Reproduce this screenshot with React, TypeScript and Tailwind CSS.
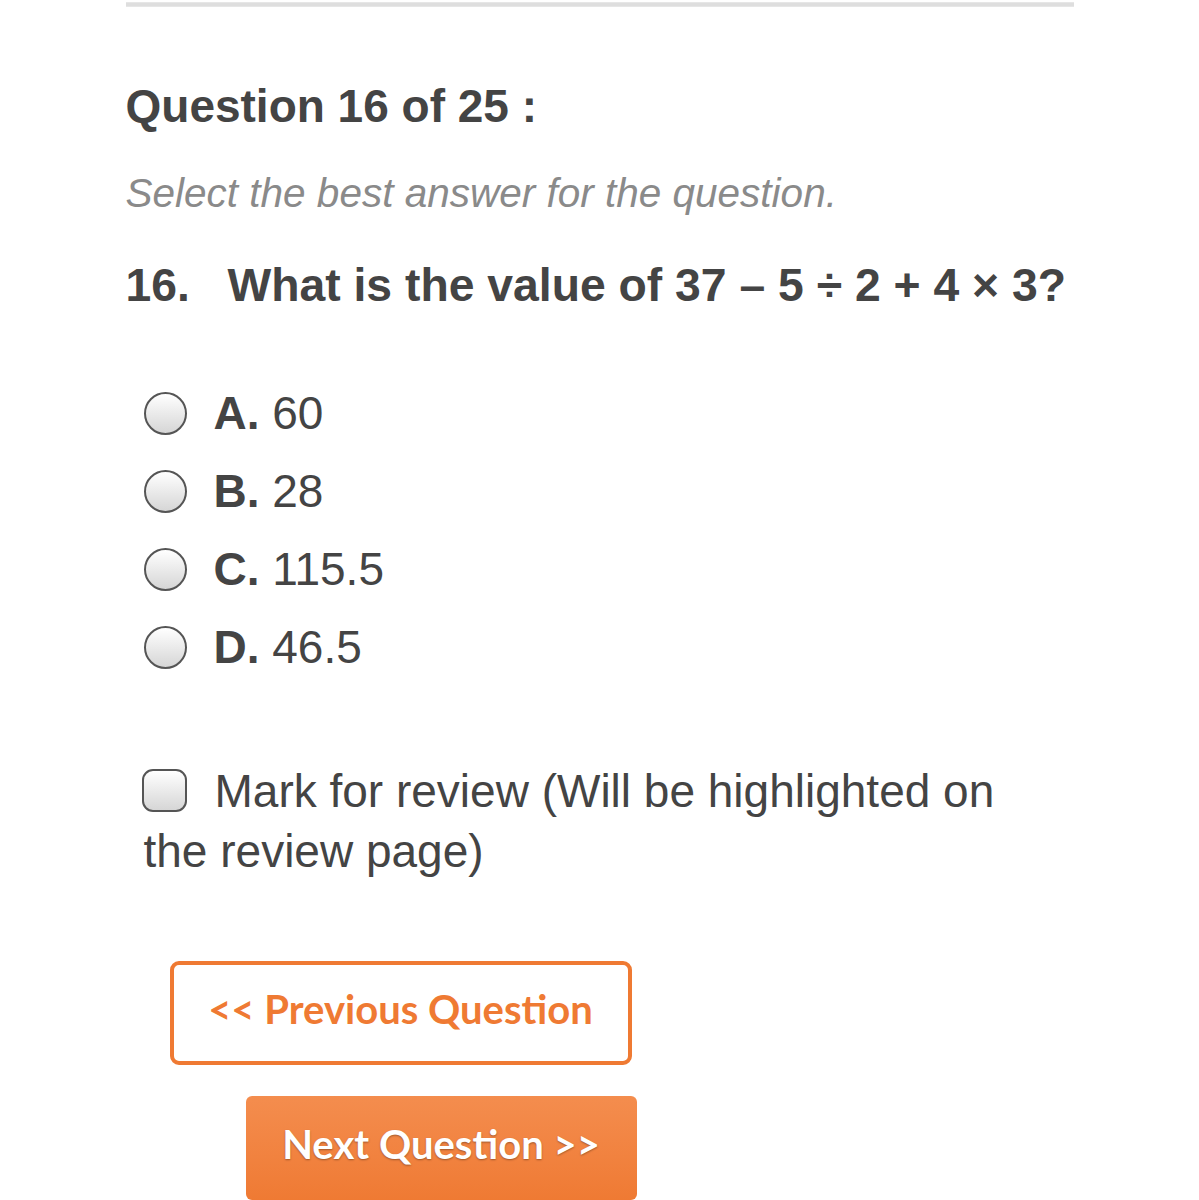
import React from 'react';

const options = [
    { letter: 'A.', value: '60' },
    { letter: 'B.', value: '28' },
    { letter: 'C.', value: '115.5' },
    { letter: 'D.', value: '46.5' },
];

function Radio() {
    return (
        <span className="inline-block w-[43px] h-[43px] shrink-0 rounded-full border-2 border-[#555] bg-linear-to-b from-white to-[#d6d6d6]" />
    );
}

export default function App() {
    return (
        <div className="min-h-screen bg-white text-[#444]" style={{ fontFamily: '"Liberation Sans", Arial, sans-serif' }}>
            <div className="mx-auto w-[948px] pt-[2px]">
                <div className="h-[5px] bg-[#dedede] border-y border-[#e6e6e6]" />

                <h1 className="mt-[76px] text-[46px] leading-[46px] font-bold">Question 16 of 25 :</h1>

                <p className="mt-[44px] text-[40.5px] leading-[40px] italic text-[#8a8a8a]">
                    Select the best answer for the question.
                </p>

                <h2 className="mt-[49px] text-[46.3px] leading-[46px] font-bold whitespace-nowrap">
                    <span className="inline-block w-[102px]">16.</span>
                    What is the value of 37 – 5 ÷ 2 + 4 × 3?
                </h2>

                <div className="mt-[66px] flex flex-col pl-[18px]">
                    {options.map((o) => (
                        <label key={o.letter} className="flex h-[78px] items-center gap-[27px] text-[46px] leading-none">
                            <Radio />
                            <span>
                                <span className="font-bold">{o.letter}</span> {o.value}
                            </span>
                        </label>
                    ))}
                </div>

                <p className="mt-[75px] ml-[18px] w-[900px] text-[46px] leading-[60px]">
                    <span className="inline-block w-[45px] h-[43px] mr-[28px] ml-[-2px] align-[-5px] rounded-[11px] border-2 border-[#555] bg-linear-to-b from-white to-[#d6d6d6]" />
                    Mark for review (Will be highlighted on the review page)
                </p>

                <div className="mt-[80px] flex flex-col" style={{ fontFamily: 'Lato, "Open Sans", sans-serif' }}>
                    <button className="ml-[44px] w-[462px] h-[104px] pb-[8px] rounded-[9px] border-4 border-[#ef7a33] bg-white text-[#ef7a33] text-[40px] font-bold">
                        &lt;&lt; Previous Question
                    </button>
                    <button className="mt-[31px] ml-[120px] w-[391px] h-[104px] pb-[8px] rounded-[6px] bg-linear-to-b from-[#f48d4e] to-[#ef7a33] text-white text-[40px] font-bold [text-shadow:0_1px_2px_rgba(0,0,0,0.35)]">
                        Next Question &gt;&gt;
                    </button>
                </div>
            </div>
        </div>
    );
}
